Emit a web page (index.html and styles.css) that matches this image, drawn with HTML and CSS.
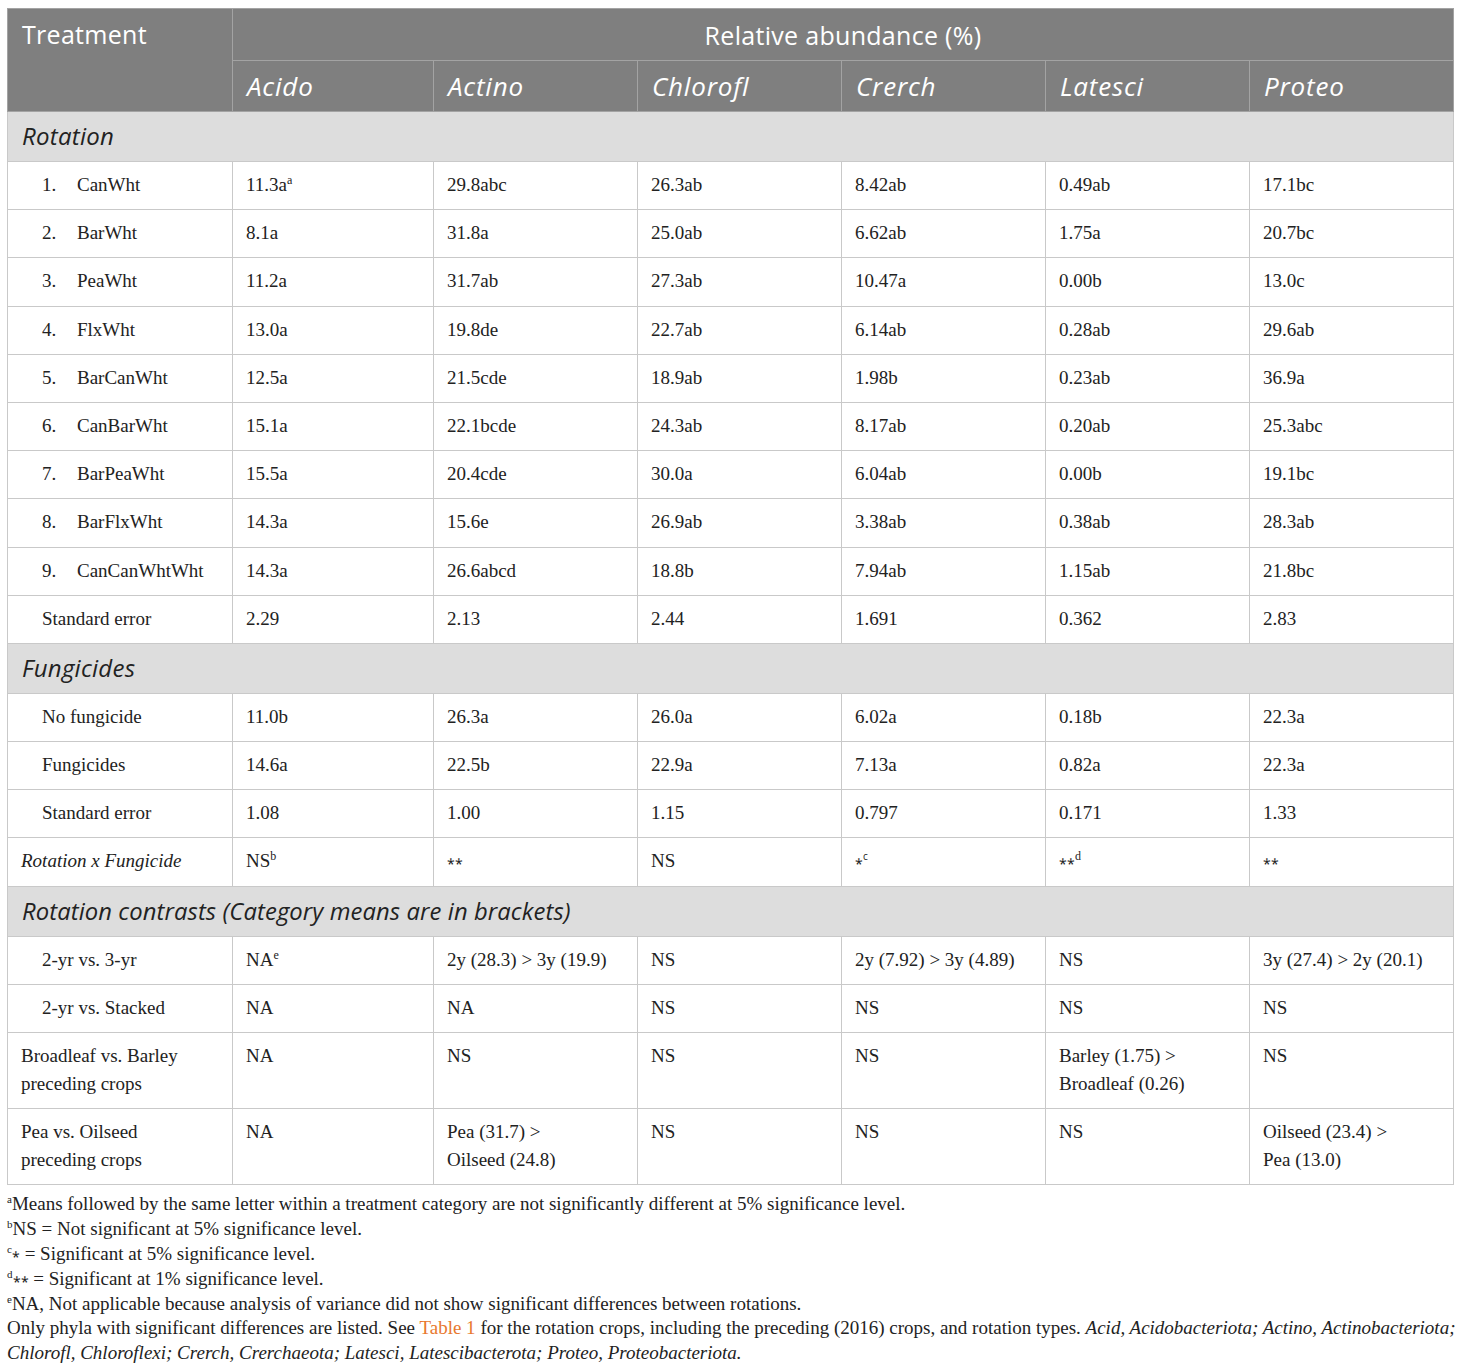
FILE: index.html
```html
<!DOCTYPE html>
<html>
<head>
<meta charset="utf-8">
<link rel="stylesheet" href="styles.css">
</head>
<body>
<div class="wrap">
<table class="tbl">
  <colgroup>
    <col class="c0"><col class="c1"><col class="c2"><col class="c3"><col class="c4"><col class="c5"><col class="c6">
  </colgroup>
  <thead>
    <tr class="h1">
      <th rowspan="2" class="treat">Treatment</th>
      <th colspan="6" class="rel">Relative abundance (%)</th>
    </tr>
    <tr class="h2">
      <th>Acido</th><th>Actino</th><th>Chlorofl</th><th>Crerch</th><th>Latesci</th><th>Proteo</th>
    </tr>
  </thead>
  <tbody>
    <tr class="sec"><td colspan="7">Rotation</td></tr>
    <tr><td class="ind"><span class="num">1.</span>CanWht</td><td>11.3a<sup>a</sup></td><td>29.8abc</td><td>26.3ab</td><td>8.42ab</td><td>0.49ab</td><td>17.1bc</td></tr>
    <tr><td class="ind"><span class="num">2.</span>BarWht</td><td>8.1a</td><td>31.8a</td><td>25.0ab</td><td>6.62ab</td><td>1.75a</td><td>20.7bc</td></tr>
    <tr><td class="ind"><span class="num">3.</span>PeaWht</td><td>11.2a</td><td>31.7ab</td><td>27.3ab</td><td>10.47a</td><td>0.00b</td><td>13.0c</td></tr>
    <tr><td class="ind"><span class="num">4.</span>FlxWht</td><td>13.0a</td><td>19.8de</td><td>22.7ab</td><td>6.14ab</td><td>0.28ab</td><td>29.6ab</td></tr>
    <tr><td class="ind"><span class="num">5.</span>BarCanWht</td><td>12.5a</td><td>21.5cde</td><td>18.9ab</td><td>1.98b</td><td>0.23ab</td><td>36.9a</td></tr>
    <tr><td class="ind"><span class="num">6.</span>CanBarWht</td><td>15.1a</td><td>22.1bcde</td><td>24.3ab</td><td>8.17ab</td><td>0.20ab</td><td>25.3abc</td></tr>
    <tr><td class="ind"><span class="num">7.</span>BarPeaWht</td><td>15.5a</td><td>20.4cde</td><td>30.0a</td><td>6.04ab</td><td>0.00b</td><td>19.1bc</td></tr>
    <tr><td class="ind"><span class="num">8.</span>BarFlxWht</td><td>14.3a</td><td>15.6e</td><td>26.9ab</td><td>3.38ab</td><td>0.38ab</td><td>28.3ab</td></tr>
    <tr><td class="ind"><span class="num">9.</span>CanCanWhtWht</td><td>14.3a</td><td>26.6abcd</td><td>18.8b</td><td>7.94ab</td><td>1.15ab</td><td>21.8bc</td></tr>
    <tr><td class="ind">Standard error</td><td>2.29</td><td>2.13</td><td>2.44</td><td>1.691</td><td>0.362</td><td>2.83</td></tr>
    <tr class="sec"><td colspan="7">Fungicides</td></tr>
    <tr><td class="ind">No fungicide</td><td>11.0b</td><td>26.3a</td><td>26.0a</td><td>6.02a</td><td>0.18b</td><td>22.3a</td></tr>
    <tr><td class="ind">Fungicides</td><td>14.6a</td><td>22.5b</td><td>22.9a</td><td>7.13a</td><td>0.82a</td><td>22.3a</td></tr>
    <tr><td class="ind">Standard error</td><td>1.08</td><td>1.00</td><td>1.15</td><td>0.797</td><td>0.171</td><td>1.33</td></tr>
    <tr><td class="it">Rotation x Fungicide</td><td>NS<sup>b</sup></td><td><span class="ast">⁎⁎</span></td><td>NS</td><td><span class="ast">⁎</span><sup class="sc">c</sup></td><td><span class="ast">⁎⁎</span><sup>d</sup></td><td><span class="ast">⁎⁎</span></td></tr>
    <tr class="sec"><td colspan="7" class="long">Rotation contrasts (Category means are in brackets)</td></tr>
    <tr><td class="ind">2-yr vs. 3-yr</td><td>NA<sup>e</sup></td><td>2y (28.3) &gt; 3y (19.9)</td><td>NS</td><td>2y (7.92) &gt; 3y (4.89)</td><td>NS</td><td>3y (27.4) &gt; 2y (20.1)</td></tr>
    <tr><td class="ind">2-yr vs. Stacked</td><td>NA</td><td>NA</td><td>NS</td><td>NS</td><td>NS</td><td>NS</td></tr>
    <tr><td>Broadleaf vs. Barley<br>preceding crops</td><td>NA</td><td>NS</td><td>NS</td><td>NS</td><td>Barley (1.75) &gt;<br>Broadleaf (0.26)</td><td>NS</td></tr>
    <tr><td>Pea vs. Oilseed<br>preceding crops</td><td>NA</td><td>Pea (31.7) &gt;<br>Oilseed (24.8)</td><td>NS</td><td>NS</td><td>NS</td><td>Oilseed (23.4) &gt;<br>Pea (13.0)</td></tr>
  </tbody>
</table>
<div class="notes">
  <p><sup>a</sup>Means followed by the same letter within a treatment category are not significantly different at 5% significance level.</p>
  <p><sup>b</sup>NS = Not significant at 5% significance level.</p>
  <p><sup>c</sup><span class="ast">⁎</span> = Significant at 5% significance level.</p>
  <p><sup>d</sup><span class="ast">⁎⁎</span> = Significant at 1% significance level.</p>
  <p><sup>e</sup>NA, Not applicable because analysis of variance did not show significant differences between rotations.</p>
  <p><span class="nowrap">Only phyla with significant differences are listed. See <span class="link">Table 1</span> for the rotation crops, including the preceding (2016) crops, and rotation types. <i>Acid, Acidobacteriota; Actino, Actinobacteriota;</i></span><br><i>Chlorofl, Chloroflexi; Crerch, Crerchaeota; Latesci, Latescibacterota; Proteo, Proteobacteriota.</i></p>
</div>
</div>
</body>
</html>
```

FILE: styles.css
```css
html, body {
  margin: 0;
  padding: 0;
  background: #ffffff;
}
.wrap {
  padding: 8px 8px 0 7px;
}
.tbl {
  width: 1446px;
  border-collapse: collapse;
  table-layout: fixed;
  font-family: "Liberation Serif", "Times New Roman", serif;
  font-size: 19px;
  color: #222;
}
.c0 { width: 225px; }
.c1 { width: 201px; }
.c2 { width: 204px; }
.c3 { width: 204px; }
.c4 { width: 204px; }
.c5 { width: 204px; }
.c6 { width: 204px; }

.tbl th {
  background: #7f7f7f;
  color: #ffffff;
  font-family: "Open Sans", "Noto Sans", sans-serif;
  font-weight: normal;
  font-size: 25px;
  letter-spacing: 0.3px;
  text-align: left;
  border: 1px solid #a3a3a3;
  padding: 0 14px;
}
.tbl .h1 th {
  height: 51px;
  vertical-align: middle;
}
.tbl th.treat {
  vertical-align: top;
  padding-top: 8px;
  padding-left: 14px;
}
.tbl th.rel {
  text-align: center;
}
.tbl .h2 th {
  height: 50px;
  font-style: italic;
  font-size: 26px;
  letter-spacing: 0.8px;
}
.tbl td {
  border: 1px solid #c9c9c9;
  padding: 9px 13px 10.2px 13px;
  line-height: 28px;
  vertical-align: top;
}
.tbl tr.sec td {
  background: #dddddd;
  font-family: "Open Sans", "Noto Sans", sans-serif;
  font-style: italic;
  font-size: 24px;
  letter-spacing: 0.25px;
  padding: 8px 14px 9px 14px;
  line-height: 32px;
}
.tbl tr.sec td.long {
  letter-spacing: 0.1px;
  font-size: 23.8px;
}
.tbl td.ind {
  padding-left: 34px;
}
.num {
  display: inline-block;
  width: 35px;
}
.tbl td.it {
  font-style: italic;
}
sup {
  font-size: 12px;
  line-height: 0;
  vertical-align: 7px;
}
.ast {
  font-size: 14px;
  line-height: 0;
  vertical-align: 5px;
}
sup.sc {
  font-family: "Open Sans", sans-serif;
  font-size: 10px;
}
.notes {
  margin-top: 7px;
  font-family: "Liberation Serif", "Times New Roman", serif;
  font-size: 19px;
  color: #222;
  line-height: 24.8px;
}
.notes p {
  margin: 0;
  height: 24.8px;
}
.notes p:last-child {
  height: auto;
}
.notes sup {
  font-size: 11px;
  vertical-align: 7px;
}
.notes .ast {
  vertical-align: 5px;
}
.nowrap {
  white-space: nowrap;
}
.link {
  color: #e8782f;
}
```
